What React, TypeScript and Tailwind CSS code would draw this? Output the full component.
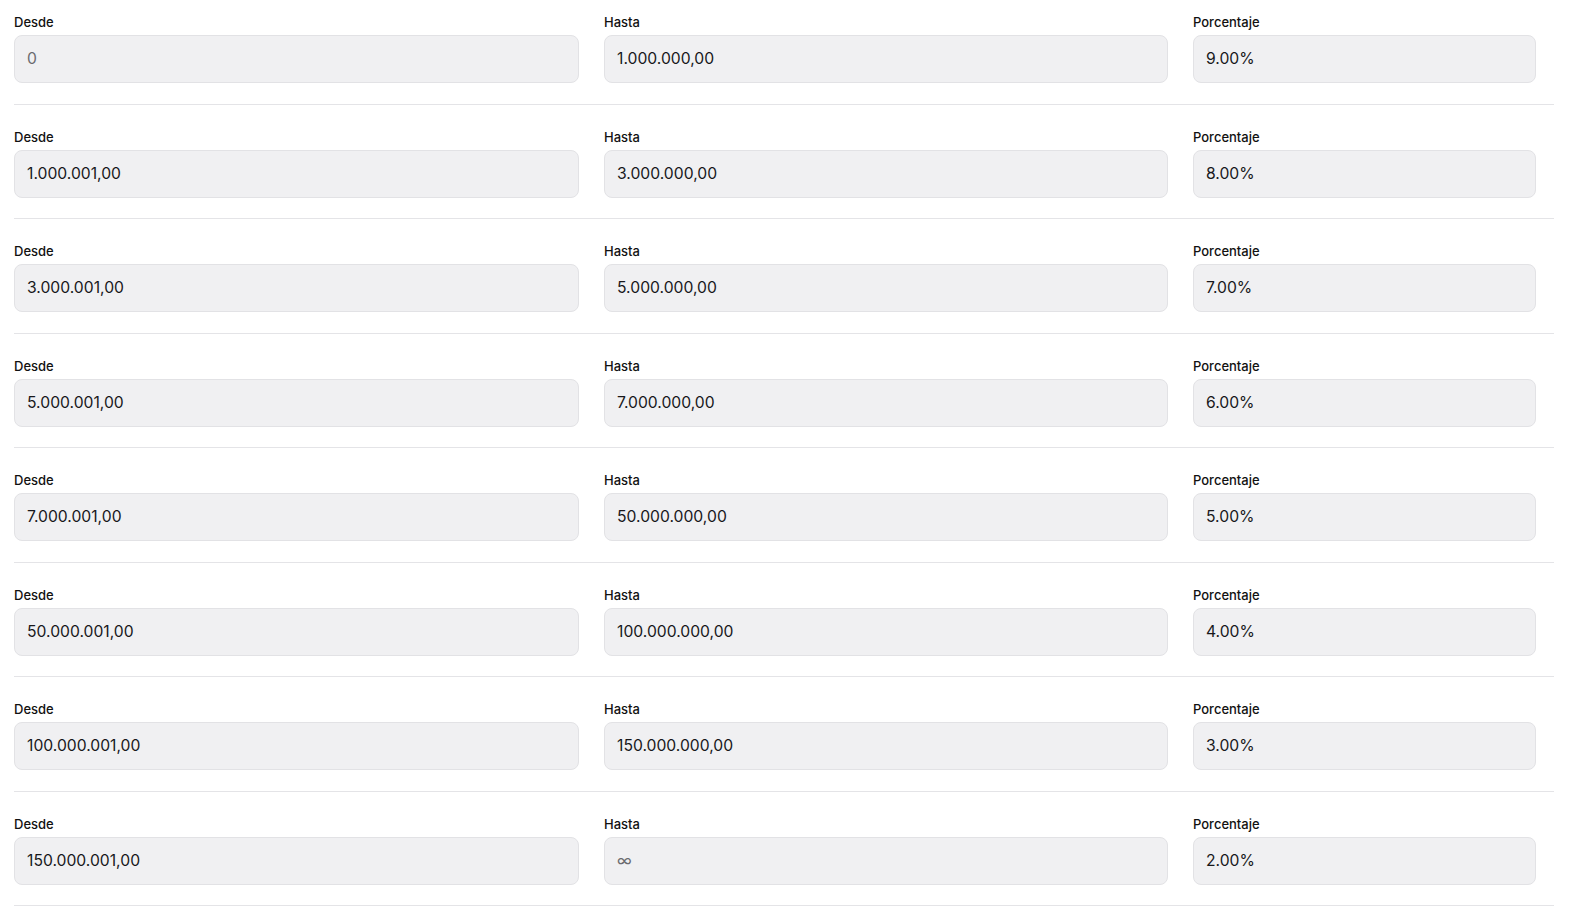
import React from "react";

type Row = { desde: string; hasta: string; pct: string; desdePh?: boolean; hastaPh?: boolean };

const rows: Row[] = [
  { desde: "0", hasta: "1.000.000,00", pct: "9.00%", desdePh: true },
  { desde: "1.000.001,00", hasta: "3.000.000,00", pct: "8.00%" },
  { desde: "3.000.001,00", hasta: "5.000.000,00", pct: "7.00%" },
  { desde: "5.000.001,00", hasta: "7.000.000,00", pct: "6.00%" },
  { desde: "7.000.001,00", hasta: "50.000.000,00", pct: "5.00%" },
  { desde: "50.000.001,00", hasta: "100.000.000,00", pct: "4.00%" },
  { desde: "100.000.001,00", hasta: "150.000.000,00", pct: "3.00%" },
  { desde: "150.000.001,00", hasta: "∞", pct: "2.00%", hastaPh: true },
];

function Field({ label, value, placeholder, width }: { label: string; value: string; placeholder?: boolean; width: string }) {
  return (
    <div className={`flex flex-col ${width}`}>
      <label className="text-[13px] leading-5 font-medium text-[#111111] mb-[3px]">{label}</label>
      <div className="h-[48px] rounded-lg border border-[#e2e2e5] bg-[#f0f0f2] flex items-center px-3">
        <span className={`text-[15.7px] ${placeholder ? "text-[#6b6b70]" : "text-[#18181b]"}`}>{value}</span>
      </div>
    </div>
  );
}

export default function App() {
  return (
    <div className="min-h-screen bg-white px-[14px]" style={{ fontFamily: "Inter, 'Noto Sans', sans-serif" }}>
      <div className="w-[1540px]">
        {rows.map((r, i) => (
          <div key={i} className={`flex gap-[25px] border-b border-[#e4e4e7] pb-[20.5px] ${i === 0 ? "pt-3" : "pt-[22px]"}`}>
            <Field label="Desde" value={r.desde} placeholder={r.desdePh} width="w-[565px]" />
            <Field label="Hasta" value={r.hasta} placeholder={r.hastaPh} width="w-[564px]" />
            <Field label="Porcentaje" value={r.pct} width="w-[343px]" />
          </div>
        ))}
      </div>
    </div>
  );
}
